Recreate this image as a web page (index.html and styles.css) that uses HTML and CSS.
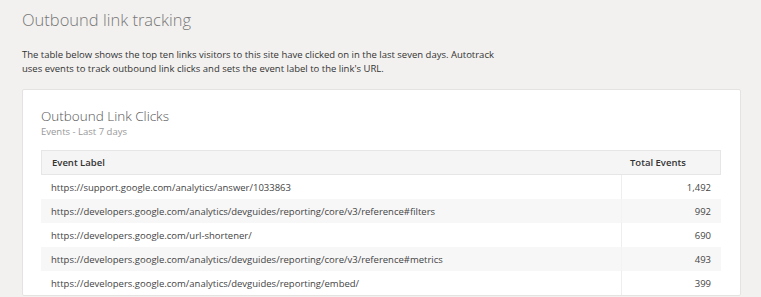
FILE: index.html
```html
<!DOCTYPE html>
<html>
<head>
<meta charset="utf-8">
<link rel="stylesheet" href="styles.css">
</head>
<body>
<div class="page">
  <h1 class="title">Outbound link tracking</h1>
  <p class="intro">The table below shows the top ten links visitors to this site have clicked on in the last seven days. Autotrack uses events to track outbound link clicks and sets the event label to the link's URL.</p>
  <div class="card">
    <div class="card-head">
      <div class="card-title">Outbound Link Clicks</div>
      <div class="card-sub">Events - Last 7 days</div>
    </div>
    <table class="data">
      <thead>
        <tr><th class="label">Event Label</th><th class="num">Total Events</th></tr>
      </thead>
      <tbody>
        <tr><td class="label">https://support.google.com/analytics/answer/1033863</td><td class="num">1,492</td></tr>
        <tr><td class="label">https://developers.google.com/analytics/devguides/reporting/core/v3/reference#filters</td><td class="num">992</td></tr>
        <tr><td class="label">https://developers.google.com/url-shortener/</td><td class="num">690</td></tr>
        <tr><td class="label">https://developers.google.com/analytics/devguides/reporting/core/v3/reference#metrics</td><td class="num">493</td></tr>
        <tr><td class="label">https://developers.google.com/analytics/devguides/reporting/embed/</td><td class="num">399</td></tr>
      </tbody>
    </table>
  </div>
</div>
</body>
</html>
```
FILE: styles.css
```css
html, body {
  margin: 0;
  padding: 0;
  background: #f2f1ef;
  font-family: "Open Sans", "Liberation Sans", sans-serif;
  color: #333;
}
.page {
  padding: 8px 20px 0 22px;
}
.title {
  margin: 0;
  font-size: 16.5px;
  font-weight: 300;
  color: #777;
  line-height: 24px;
}
.intro {
  margin: 16px 0 0 0;
  max-width: 478px;
  font-size: 9.5px;
  line-height: 14px;
  color: #333;
}
.card {
  margin-top: 13px;
  background: #fff;
  border: 1px solid #e4e3e1;
  border-radius: 2px;
  padding: 17px 19px 0 18px;
}
.card-head {
  margin-bottom: 12px;
}
.card-title {
  font-size: 13.5px;
  font-weight: 300;
  color: #555;
  line-height: 18px;
}
.card-sub {
  font-size: 9.5px;
  font-weight: 400;
  color: #999;
  line-height: 13px;
}
.data {
  width: 100%;
  border-collapse: separate;
  border-spacing: 0;
  font-size: 9.5px;
  color: #444;
}
.data th {
  background: #f5f5f5;
  border-top: 1px solid #e6e6e6;
  border-bottom: 1px solid #e6e6e6;
  font-weight: 600;
  height: 23px;
  padding: 0 10px;
  text-align: left;
  color: #333;
}
.data th.label {
  border-left: 1px solid #e6e6e6;
}
.data th.num {
  border-right: 1px solid #e6e6e6;
  width: 79px;
  padding-left: 9px;
}
.data td {
  height: 24px;
  padding: 0 10px;
}
.data td.num {
  width: 79px;
  text-align: right;
  padding-right: 10px;
  border-left: 1px solid #eee;
}
.data tbody tr:nth-child(even) td {
  background: #f7f7f7;
}
.data tbody tr:nth-child(even) td.num {
  border-left-color: #f3f3f3;
}
```
